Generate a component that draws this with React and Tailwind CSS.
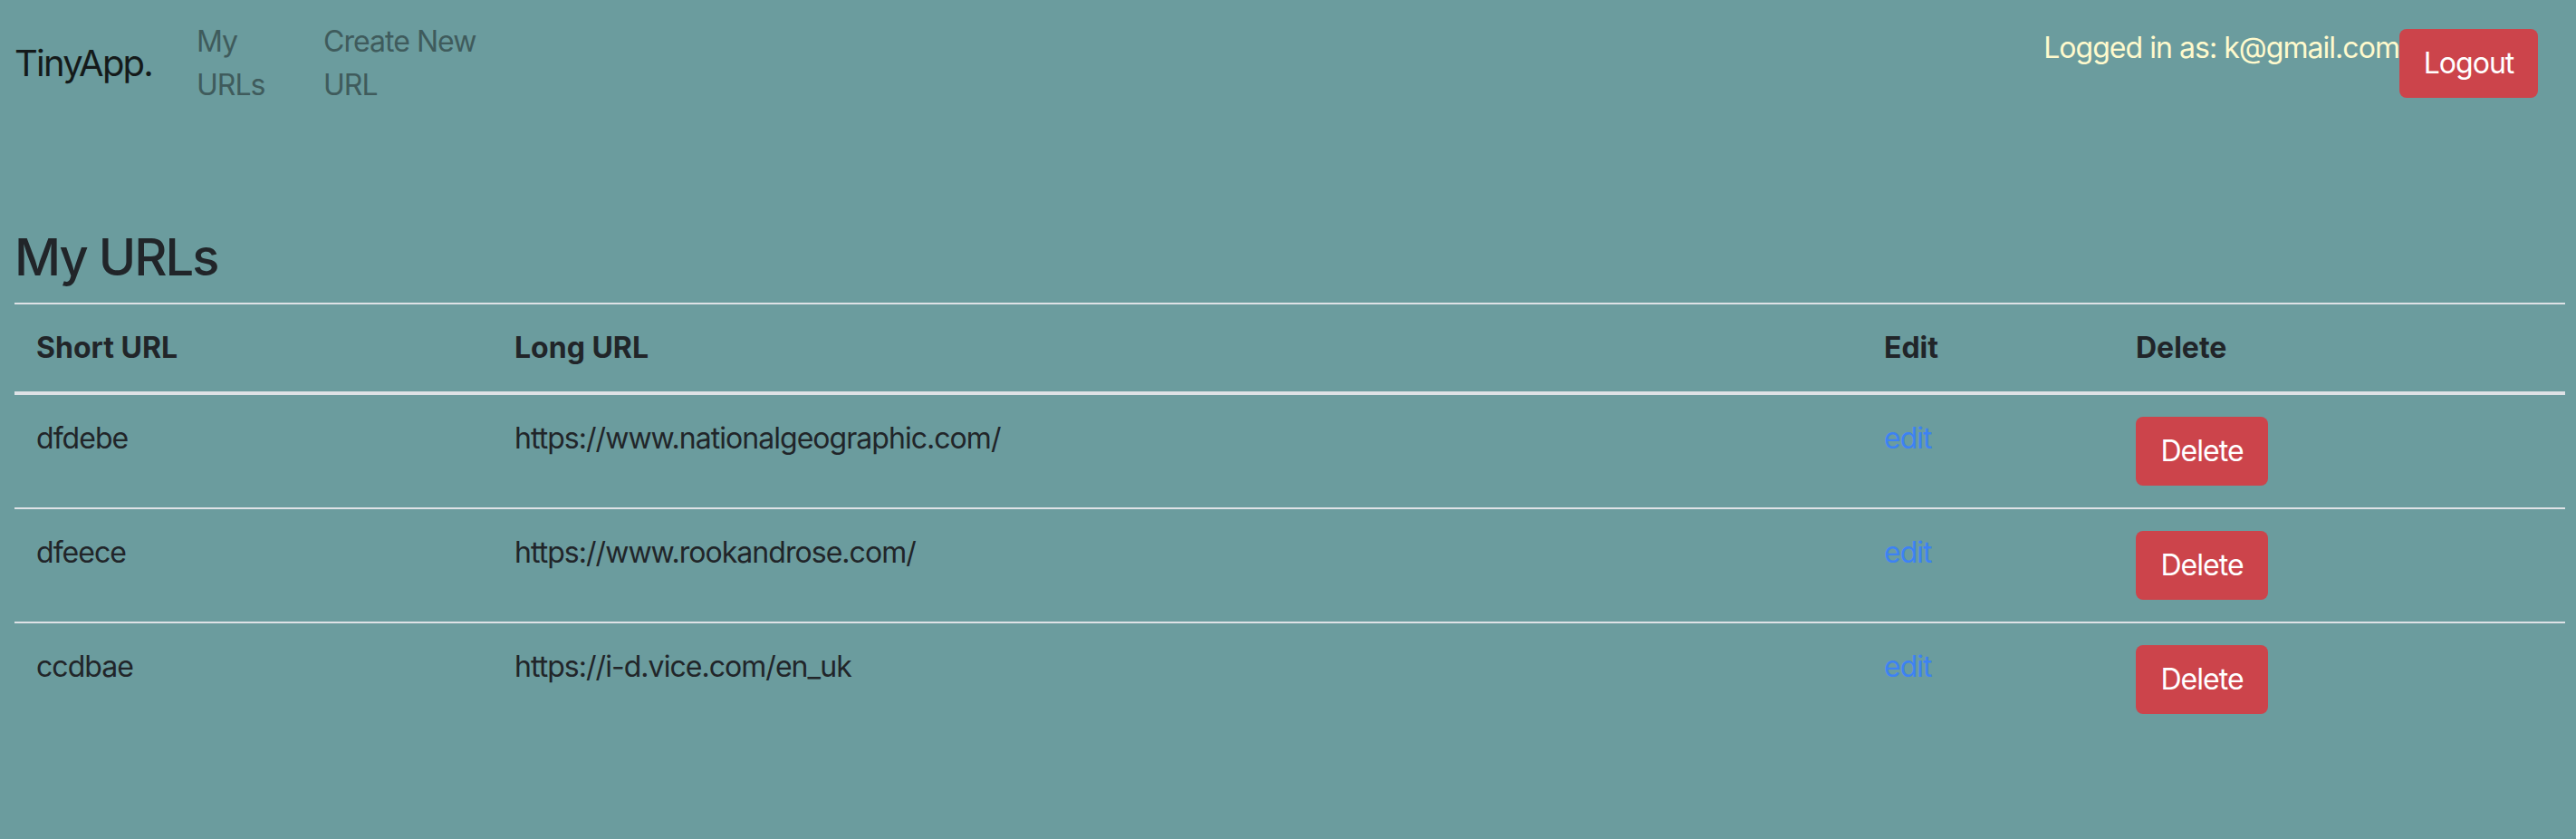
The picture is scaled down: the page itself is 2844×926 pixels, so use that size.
import React from "react";

const urls = [
  { short: "dfdebe", long: "https://www.nationalgeographic.com/" },
  { short: "dfeece", long: "https://www.rookandrose.com/" },
  { short: "ccdbae", long: "https://i-d.vice.com/en_uk" },
];

function Navbar() {
  return (
    <nav className="flex items-center h-[140px] pl-[16px] pr-[42px]">
      <a href="#" className="block w-[185px] text-[40px] leading-[60px] tracking-[-0.045em] text-[#141a1a]">
        TinyApp.
      </a>
      <ul className="flex">
        <li>
          <a href="#" className="block w-[140px] px-[16px] text-[32px] leading-[48px] tracking-[-0.03em] text-[#3f5b5c]">
            My URLs
          </a>
        </li>
        <li>
          <a href="#" className="block w-[220px] px-[16px] text-[32px] leading-[48px] tracking-[-0.03em] text-[#3f5b5c]">
            Create New URL
          </a>
        </li>
      </ul>
      <div className="ml-auto self-start flex items-start">
        <span className="mt-[29px] text-[32px] leading-[48px] tracking-[-0.03em] text-[#fffacd]">
          Logged in as: k@gmail.com
        </span>
        <button className="mt-[32px] w-[153px] h-[76px] rounded-[8px] bg-[#cc444b] text-white text-[32px] leading-[48px] tracking-[-0.03em]">
          Logout
        </button>
      </div>
    </nav>
  );
}

function UrlTable() {
  return (
    <table className="ml-[16px] w-[2816px] text-left text-[32px] leading-[48px] text-[#212529]">
      <thead>
        <tr>
          <th className="w-[528px] p-[24px] font-bold border-t-2 border-b-4 border-[#dee2e6]">Short URL</th>
          <th className="w-[1512px] p-[24px] font-bold border-t-2 border-b-4 border-[#dee2e6]">Long URL</th>
          <th className="w-[278px] p-[24px] font-bold border-t-2 border-b-4 border-[#dee2e6]">Edit</th>
          <th className="w-[498px] p-[24px] font-bold border-t-2 border-b-4 border-[#dee2e6]">Delete</th>
        </tr>
      </thead>
      <tbody className="tracking-[-0.03em]">
        {urls.map((u) => (
          <tr key={u.short}>
            <td className="p-[24px] align-top border-t-2 border-[#dee2e6]">{u.short}</td>
            <td className="p-[24px] align-top border-t-2 border-[#dee2e6]">{u.long}</td>
            <td className="p-[24px] align-top border-t-2 border-[#dee2e6]">
              <a href="#" className="text-[#3d82f4]">edit</a>
            </td>
            <td className="p-[24px] align-top border-t-2 border-[#dee2e6]">
              <button className="block w-[146px] h-[76px] rounded-[8px] bg-[#cc444b] text-white text-[32px] leading-[48px]">
                Delete
              </button>
            </td>
          </tr>
        ))}
      </tbody>
    </table>
  );
}

export default function App() {
  return (
    <div className="min-h-[926px] bg-[#6b9c9e] font-['Inter',sans-serif]">
      <Navbar />
      <h3 className="mt-[111px] mb-[16px] ml-[16px] text-[56px] leading-[67px] font-medium tracking-[-0.035em] text-[#212529]">
        My URLs
      </h3>
      <UrlTable />
    </div>
  );
}
